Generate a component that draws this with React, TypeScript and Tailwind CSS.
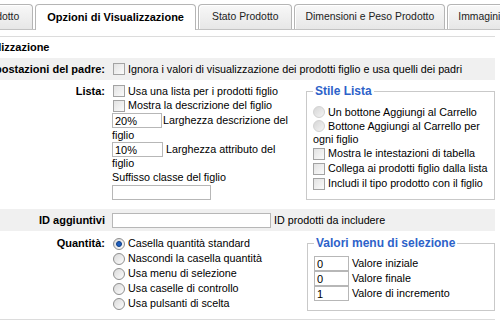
import React from "react";

const tabs = [
  { label: "Prodotto", active: false, pad: "pl-[10px] pr-[13px] -ml-[31px]" },
  { label: "Opzioni di Visualizzazione", active: true, pad: "px-[11px]" },
  { label: "Stato Prodotto", active: false, pad: "px-[13px]" },
  { label: "Dimensioni e Peso Prodotto", active: false, pad: "px-[10px]" },
  { label: "Immagini Prodotto", active: false, pad: "px-[10px]" },
];

function Checkbox() {
  return (
    <span className="inline-block w-[12px] h-[12px] shrink-0 border border-[#a3a3a3] bg-linear-to-br from-[#e2e2e2] to-[#fbfbfb]" />
  );
}

function Radio({ checked = false, light = false }: { checked?: boolean; light?: boolean }) {
  return (
    <span
      className={`relative inline-flex items-center justify-center w-[12px] h-[12px] shrink-0 rounded-full border ${
        light ? "border-[#d2d2d2] bg-linear-to-br from-[#d6d6d6] to-[#f4f4f4]" : "border-[#8e8e8e] bg-linear-to-br from-[#d9d9d9] to-[#fdfdfd]"
      }`}
    >
      {checked && <span className="w-[6px] h-[6px] rounded-full bg-[#1f5fbf] border border-[#0d3d85]" />}
    </span>
  );
}

function TextInput({ value = "", w }: { value?: string; w: string }) {
  return (
    <input
      readOnly
      value={value}
      className={`${w} h-[15px] shrink-0 border border-[#b7b7b7] bg-white px-[2px] text-[11px] leading-none text-black outline-none`}
    />
  );
}

function Fieldset({ title, children }: { title: string; children: React.ReactNode }) {
  return (
    <fieldset className="w-[188px] border border-[#c9c9c9] px-[6px] pb-[5px]">
      <legend className="px-[2px] text-[12px] leading-[14px] font-bold text-[#2d62c9]">{title}</legend>
      {children}
    </fieldset>
  );
}

export default function App() {
  return (
    <div className="w-[500px] h-[323px] overflow-hidden bg-white text-[10.75px] text-black font-['Liberation_Sans',Arial,sans-serif]">
      {/* Tabs */}
      <div className="h-[30px] flex items-end gap-[2px] border-b border-[#c2c2c2] whitespace-nowrap">
        {tabs.map((t) => (
          <div
            key={t.label}
            className={`shrink-0 flex items-center rounded-t-[4px] border border-b-0 border-[#b5b5b5] ${t.pad} ${
              t.active
                ? "h-[26px] -mb-[1px] bg-white font-bold text-[11px] text-black pb-[1px]"
                : "h-[25px] text-[10.4px] bg-linear-to-b from-[#f8f8f8] to-[#e7e7e7] text-[#222] shadow-[inset_1px_1px_0_#ffffff]"
            }`}
          >
            {t.label}
          </div>
        ))}
      </div>

      {/* Content */}
      <div className="mt-[6px] -ml-[40px] w-[535px] border-t border-[#dcdcdc] border-b">
        <div className="h-[21px] flex items-center pl-[9px] font-bold text-[11px]">Visualizzazione</div>

        <div className="h-[22px] flex items-center bg-[#f0f0f0]">
          <div className="w-[145px] text-right font-bold text-[11px] whitespace-nowrap">Impostazioni del padre:</div>
          <div className="pl-[8px] flex items-center gap-[3px] whitespace-nowrap">
            <Checkbox />
            <span>Ignora i valori di visualizzazione dei prodotti figlio e usa quelli dei padri</span>
          </div>
        </div>

        <div className="flex pt-[4px] pb-[9px]">
          <div className="w-[145px] text-right font-bold text-[11px] leading-[14px]">Lista:</div>
          <div className="w-[201px] pl-[7px] whitespace-nowrap">
            <div className="h-[14px] flex items-center gap-[3px] pl-[1px]">
              <Checkbox />
              <span>Usa una lista per i prodotti figlio</span>
            </div>
            <div className="h-[15px] flex items-center gap-[3px] pl-[1px]">
              <Checkbox />
              <span>Mostra la descrizione del figlio</span>
            </div>
            <div className="h-[15px] flex items-center gap-[1px]">
              <TextInput value="20%" w="w-[50px]" />
              <span>Larghezza descrizione del</span>
            </div>
            <div className="h-[14px] flex items-center">figlio</div>
            <div className="h-[15px] flex items-center gap-[3px]">
              <TextInput value="10%" w="w-[51px]" />
              <span>Larghezza attributo del</span>
            </div>
            <div className="h-[13px] flex items-center">figlio</div>
            <div className="h-[15px] flex items-center">Suffisso classe del figlio</div>
            <div className="h-[15px] flex items-center">
              <TextInput w="w-[99px]" />
            </div>
          </div>
          <Fieldset title="Stile Lista">
            <div className="pt-[7px] whitespace-nowrap">
              <div className="h-[14px] flex items-center gap-[3px]">
                <Radio light />
                <span>Un bottone Aggiungi al Carrello</span>
              </div>
              <div className="h-[14px] flex items-center gap-[3px]">
                <Radio light />
                <span>Bottone Aggiungi al Carrello per</span>
              </div>
              <div className="h-[13px] flex items-center">ogni figlio</div>
              <div className="h-[15px] flex items-center gap-[3px]">
                <Checkbox />
                <span>Mostra le intestazioni di tabella</span>
              </div>
              <div className="h-[15px] flex items-center gap-[3px]">
                <Checkbox />
                <span>Collega ai prodotti figlio dalla lista</span>
              </div>
              <div className="h-[15px] flex items-center gap-[3px]">
                <Checkbox />
                <span>Includi il tipo prodotto con il figlio</span>
              </div>
            </div>
          </Fieldset>
        </div>

        <div className="h-[22px] flex items-center bg-[#f0f0f0]">
          <div className="w-[145px] text-right font-bold text-[11px]">ID aggiuntivi</div>
          <div className="pl-[7px] flex items-center gap-[3px] whitespace-nowrap">
            <TextInput w="w-[159px]" />
            <span>ID prodotti da includere</span>
          </div>
        </div>

        <div className="flex pt-[5px] pb-[8px]">
          <div className="w-[145px] text-right font-bold text-[11px] leading-[15px]">Quantità:</div>
          <div className="w-[202px] pl-[8px] whitespace-nowrap">
            {[
              "Casella quantità standard",
              "Nascondi la casella quantità",
              "Usa menu di selezione",
              "Usa caselle di controllo",
              "Usa pulsanti di scelta",
            ].map((label, i) => (
              <div key={label} className="h-[15px] flex items-center gap-[3px]">
                <Radio checked={i === 0} />
                <span>{label}</span>
              </div>
            ))}
          </div>
          <Fieldset title="Valori menu di selezione">
            <div className="pt-[6px] whitespace-nowrap">
              {[
                ["0", "Valore iniziale"],
                ["0", "Valore finale"],
                ["1", "Valore di incremento"],
              ].map(([v, label]) => (
                <div key={label} className="h-[15px] flex items-center gap-[3px]">
                  <TextInput value={v} w="w-[35px]" />
                  <span>{label}</span>
                </div>
              ))}
            </div>
          </Fieldset>
        </div>
      </div>
    </div>
  );
}
